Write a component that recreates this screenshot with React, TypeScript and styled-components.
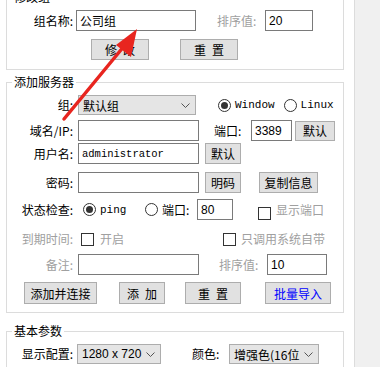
import React from "react";
import styled, { createGlobalStyle } from "styled-components";

const GlobalStyle = createGlobalStyle`
  html, body {
    margin: 0;
    padding: 0;
    background: #f0f0f0;
    overflow: hidden;
  }
  body {
    font-family: "Noto Sans CJK SC", "Liberation Sans", sans-serif;
    font-size: 12px;
    color: #000;
  }
`;

const Page = styled.div`
  position: relative;
  width: 354px;
  height: 367px;
  overflow: hidden;
  background: #fff;
  border-right: 1px solid #dcdcdc;
`;

const Content = styled.div`
  margin-top: -11px;
  padding: 0 10px 0 6px;
`;

const Group = styled.fieldset<{ $mt: number; $pb: number }>`
  margin: ${(p) => p.$mt}px 0 0;
  padding: 0 0 ${(p) => p.$pb}px;
  border: 1px solid #dcdcdc;
  min-width: 0;
`;

const Legend = styled.legend`
  margin-left: 5px;
  padding: 0 2px;
  font-size: 12px;
  line-height: 16px;
`;

const Row = styled.div<{ $mt: number; $h?: number }>`
  display: flex;
  align-items: center;
  height: ${(p) => p.$h ?? 21}px;
  margin-top: ${(p) => p.$mt}px;
`;

const Label = styled.span<{ $muted?: boolean }>`
  width: 66px;
  flex: none;
  text-align: right;
  line-height: 16px;
  white-space: nowrap;
  color: ${(p) => (p.$muted ? "#a0a0a0" : "#000")};
`;

const Text = styled.span<{ $ml: number; $w?: number; $muted?: boolean; $mono?: boolean }>`
  margin-left: ${(p) => p.$ml}px;
  width: ${(p) => (p.$w ? `${p.$w}px` : "auto")};
  flex: none;
  line-height: 16px;
  white-space: nowrap;
  color: ${(p) => (p.$muted ? "#a0a0a0" : "#000")};
  font-family: ${(p) =>
    p.$mono ? `"Liberation Mono", monospace` : `"Noto Sans CJK SC", sans-serif`};
  font-size: ${(p) => (p.$mono ? "11px" : "12px")};
`;

const Input = styled.div<{ $ml: number; $w: number; $mono?: boolean; $cjk?: boolean }>`
  margin-left: ${(p) => p.$ml}px;
  width: ${(p) => p.$w}px;
  height: 21px;
  flex: none;
  box-sizing: border-box;
  border: 1px solid #7a7a7a;
  background: #fff;
  padding: 0 3px;
  display: flex;
  align-items: center;
  white-space: nowrap;
  overflow: hidden;
  font-family: ${(p) =>
    p.$mono
      ? `"Liberation Mono", monospace`
      : p.$cjk
      ? `"Noto Sans CJK SC", sans-serif`
      : `"Liberation Sans", sans-serif`};
  font-size: ${(p) => (p.$mono ? "10.5px" : "12px")};
`;

const Button = styled.div<{ $ml: number; $w: number; $h?: number; $blue?: boolean }>`
  margin-left: ${(p) => p.$ml}px;
  width: ${(p) => p.$w}px;
  height: ${(p) => p.$h ?? 21}px;
  flex: none;
  box-sizing: border-box;
  border: 1px solid #adadad;
  background: #e1e1e1;
  display: flex;
  align-items: center;
  justify-content: center;
  white-space: pre;
  color: ${(p) => (p.$blue ? "#0000ff" : "#000")};
`;

const Select = styled.div<{ $ml: number; $w: number }>`
  margin-left: ${(p) => p.$ml}px;
  width: ${(p) => p.$w}px;
  height: 20px;
  flex: none;
  box-sizing: border-box;
  border: 1px solid #adadad;
  background: #e5e5e5;
  display: flex;
  align-items: center;
  padding: 0 5px 0 4px;
  white-space: nowrap;
  overflow: hidden;
`;

const SelectValue = styled.span<{ $latin?: boolean }>`
  flex: 1;
  overflow: hidden;
  font-family: ${(p) =>
    p.$latin ? `"Liberation Sans", sans-serif` : `"Noto Sans CJK SC", sans-serif`};
  font-size: 12px;
`;

const Radio = styled.span<{ $ml: number; $checked?: boolean }>`
  margin-left: ${(p) => p.$ml}px;
  width: 13px;
  height: 13px;
  flex: none;
  box-sizing: border-box;
  border: 1px solid #333;
  border-radius: 50%;
  background: #fff;
  display: flex;
  align-items: center;
  justify-content: center;
  &::after {
    content: "";
    width: 7px;
    height: 7px;
    border-radius: 50%;
    background: ${(p) => (p.$checked ? "#333" : "transparent")};
  }
`;

const Check = styled.span<{ $ml: number; $dy?: number }>`
  margin-left: ${(p) => p.$ml}px;
  margin-top: ${(p) => (p.$dy ?? 0) * 2}px;
  width: 13px;
  height: 13px;
  flex: none;
  box-sizing: border-box;
  border: 1px solid #333;
  background: #fff;
`;

const Arrow = styled.svg`
  position: absolute;
  left: 0;
  top: 0;
  pointer-events: none;
`;

const Chevron = () => (
  <svg width="9" height="5" viewBox="0 0 9 5">
    <path d="M0.5 0.5 L4.5 4.5 L8.5 0.5" fill="none" stroke="#555" strokeWidth="1" />
  </svg>
);

const App: React.FC = () => {
  return (
    <Page>
      <GlobalStyle />
      <Content>
        <Group $mt={0} $pb={9}>
          <Legend>修改组</Legend>
          <Row $mt={5}>
            <Label>组名称:</Label>
            <Input $ml={3} $w={120} $cjk>
              公司组
            </Input>
            <Text $ml={21} $w={46} $muted>
              排序值:
            </Text>
            <Input $ml={2} $w={48}>
              20
            </Input>
          </Row>
          <Row $mt={8}>
            <Button $ml={84} $w={58}>
              {"修\u2002改"}
            </Button>
            <Button $ml={31} $w={58}>
              {"重\u2002置"}
            </Button>
          </Row>
        </Group>

        <Group $mt={4} $pb={8}>
          <Legend>添加服务器</Legend>
          <Row $mt={5} $h={20}>
            <Label>组:</Label>
            <Select $ml={5} $w={118}>
              <SelectValue>默认组</SelectValue>
              <Chevron />
            </Select>
            <Radio $ml={22} $checked />
            <Text $ml={4} $mono>
              Window
            </Text>
            <Radio $ml={9} />
            <Text $ml={4} $mono>
              Linux
            </Text>
          </Row>
          <Row $mt={5}>
            <Label>域名/IP:</Label>
            <Input $ml={5} $w={121} />
            <Text $ml={15} $w={34}>
              端口:
            </Text>
            <Input $ml={3} $w={41}>
              3389
            </Input>
            <Button $ml={3} $w={40} $h={20}>
              默认
            </Button>
          </Row>
          <Row $mt={2}>
            <Label>用户名:</Label>
            <Input $ml={5} $w={121} $mono>
              administrator
            </Input>
            <Button $ml={6} $w={36}>
              默认
            </Button>
          </Row>
          <Row $mt={8}>
            <Label>密码:</Label>
            <Input $ml={5} $w={121} />
            <Button $ml={6} $w={36}>
              明码
            </Button>
            <Button $ml={18} $w={59}>
              复制信息
            </Button>
          </Row>
          <Row $mt={6}>
            <Label>状态检查:</Label>
            <Radio $ml={10} $checked />
            <Text $ml={4} $w={45} $mono>
              ping
            </Text>
            <Radio $ml={0} />
            <Text $ml={4} $w={35}>
              端口:
            </Text>
            <Input $ml={0} $w={36}>
              80
            </Input>
            <Check $ml={25} $dy={4} />
            <Text $ml={5} $muted>
              显示端口
            </Text>
          </Row>
          <Row $mt={9} $h={20}>
            <Label $muted>到期时间:</Label>
            <Check $ml={8} />
            <Text $ml={6} $w={123} $muted>
              开启
            </Text>
            <Check $ml={0} />
            <Text $ml={5} $muted>
              只调用系统自带
            </Text>
          </Row>
          <Row $mt={5}>
            <Label $muted>备注:</Label>
            <Input $ml={5} $w={121} />
            <Text $ml={20} $w={48} $muted>
              排序值:
            </Text>
            <Input $ml={0} $w={60}>
              10
            </Input>
          </Row>
          <Row $mt={7} $h={22}>
            <Button $ml={17} $w={73} $h={22}>
              添加并连接
            </Button>
            <Button $ml={22} $w={46} $h={22}>
              {"添\u2002加"}
            </Button>
            <Button $ml={20} $w={56} $h={22}>
              {"重\u2002置"}
            </Button>
            <Button $ml={24} $w={66} $h={22} $blue>
              批量导入
            </Button>
          </Row>
        </Group>

        <Group $mt={10} $pb={10}>
          <Legend>基本参数</Legend>
          <Row $mt={5} $h={20}>
            <Label>显示配置:</Label>
            <Select $ml={4} $w={84}>
              <SelectValue $latin>1280 x 720</SelectValue>
              <Chevron />
            </Select>
            <Text $ml={31} $w={35}>
              颜色:
            </Text>
            <Select $ml={2} $w={90}>
              <SelectValue>增强色(16位</SelectValue>
              <Chevron />
            </Select>
          </Row>
        </Group>
      </Content>

      <Arrow width="354" height="367" viewBox="0 0 354 367">
        <line x1="64" y1="119" x2="125" y2="45" stroke="#e8251f" strokeWidth="3.5" strokeLinecap="round" />
        <polygon points="137,29 116,45 131,57" fill="#e8251f" />
      </Arrow>
    </Page>
  );
};

export default App;
